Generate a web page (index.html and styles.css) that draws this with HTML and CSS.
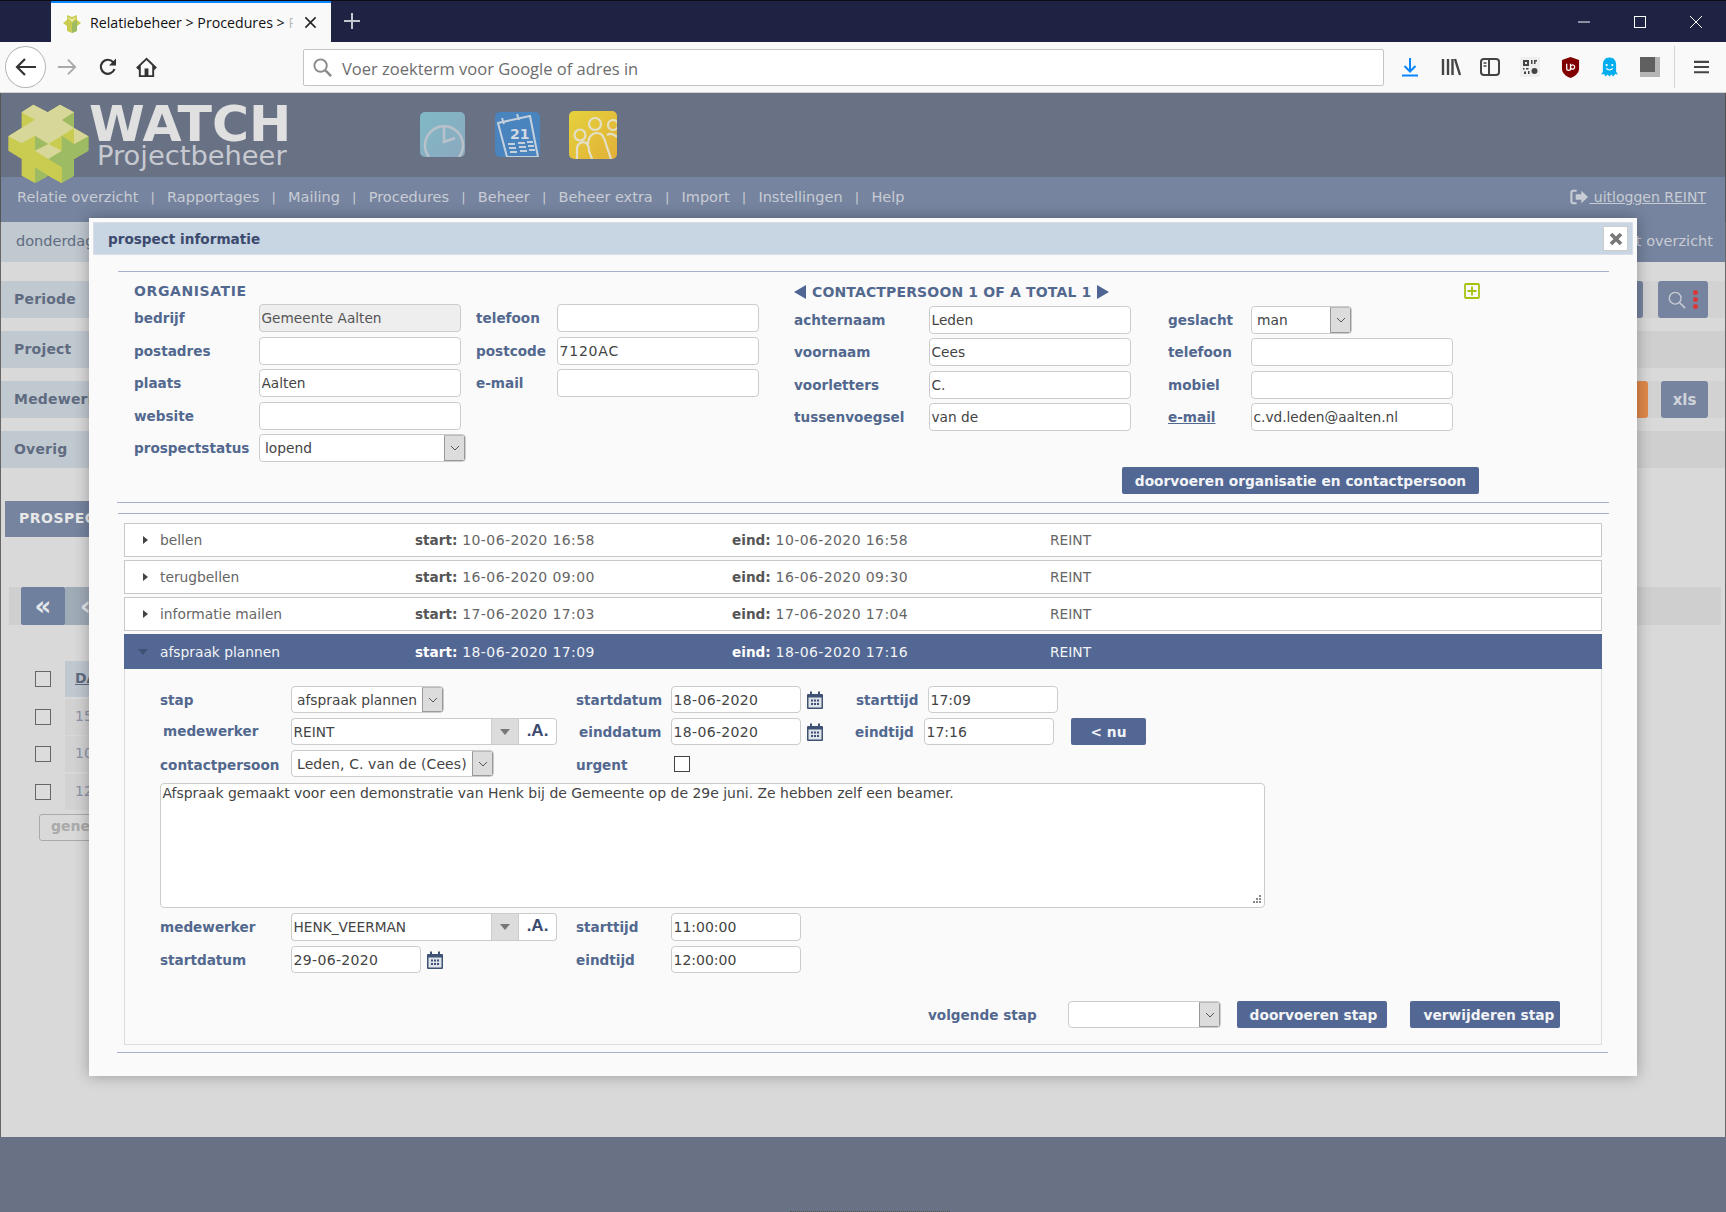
FILE: index.html
```html
<!DOCTYPE html>
<html lang="nl">
<head>
<meta charset="utf-8">
<title>Relatiebeheer &gt; Procedures</title>
<link rel="stylesheet" href="styles.css">
</head>
<body>
<div class="page">
  <div class="tabbar">
    <div class="tab">
      <svg class="favicon" viewBox="0 0 20 20"><path d="M5 2l5 2 5-2 0 5 4 3-4 3v5l-5 2-5-2v-5l-4-3 4-3z" fill="#c9cc50"/><path d="M10 10l5-3v11l-5 2z" fill="#9dbb62"/><path d="M5 4l5 2 5-2-5 5z" fill="#e8e8a0"/></svg>
      <span class="tab-title">Relatiebeheer &gt; Procedures &gt; <span class="tab-fade">P</span></span>
      <svg class="tab-close" viewBox="0 0 14 14"><path d="M1.500 1.500l11 11M12.500 1.500l-11 11" stroke="#222" stroke-width="1.600"/></svg>
    </div>
    <svg class="newtab" viewBox="0 0 18 18"><path d="M9 1v16M1 9h16" stroke="#c4c6d0" stroke-width="2"/></svg>
    <div class="winctl">
      <svg viewBox="0 0 12 12"><path d="M0 6h12" stroke="#fff" stroke-width="1"/></svg>
      <svg viewBox="0 0 12 12"><rect x=".5" y=".5" width="11" height="11" fill="none" stroke="#fff"/></svg>
      <svg viewBox="0 0 12 12"><path d="M0 0l12 12M12 0L0 12" stroke="#fff" stroke-width="1"/></svg>
    </div>
  </div>

  <div class="toolbar">
    <div class="backbtn">
      <svg viewBox="0 0 22 20"><path d="M10 2l-8 8 8 8M2 10h19" fill="none" stroke="#333" stroke-width="2.200"/></svg>
    </div>
    <svg class="tool tool-fwd" viewBox="0 0 22 20"><path d="M12 2l8 8-8 8M20 10H1" fill="none" stroke="#aaa" stroke-width="2"/></svg>
    <svg class="tool tool-reload" viewBox="0 0 20 20"><path d="M16.500 12a7 7 0 1 1-1.500-7l2 2" fill="none" stroke="#333" stroke-width="2.200"/><path d="M18 1.500v7h-7z" fill="#333"/></svg>
    <svg class="tool tool-home" viewBox="0 0 22 22"><path d="M11 2L1.500 11l1.300 1.300L4 11.200V20h14v-8.800l1.200 1.100 1.300-1.300z" fill="none" stroke="#333" stroke-width="2"/><rect x="9" y="12" width="4" height="8" fill="#333"/></svg>
    <div class="urlbar">
      <svg class="urlsearch" viewBox="0 0 22 22"><circle cx="9" cy="9" r="6.500" fill="none" stroke="#8a8a8a" stroke-width="2"/><path d="M14 14l6 6" stroke="#8a8a8a" stroke-width="2.600"/></svg>
      <span class="urltext">Voer zoekterm voor Google of adres in</span>
    </div>
    <div class="tools">
      <svg class="ti-a" viewBox="0 0 16 20"><path d="M8 1v13M2.500 9L8 14.500 13.500 9" fill="none" stroke="#0a84ff" stroke-width="2"/><path d="M0 18.500h16" stroke="#0a84ff" stroke-width="2"/></svg>
      <svg class="ti-b" viewBox="0 0 20 20"><path d="M2 2v16M7 2v16M11.500 2v16M14 2l5 16" fill="none" stroke="#444" stroke-width="2.400"/></svg>
      <svg class="ti-c" viewBox="0 0 20 18"><rect x="1" y="1" width="18" height="16" rx="3" fill="none" stroke="#444" stroke-width="2"/><path d="M9 1v16" stroke="#444" stroke-width="2"/><path d="M3.500 5h3M3.500 8h3" stroke="#444" stroke-width="1.500"/></svg>
      <svg class="ti-d" viewBox="0 0 20 20"><rect width="20" height="20" fill="#eee"/><path d="M3 3h6v6H3zM5 5v2h2V5z" fill="#444" fill-rule="evenodd"/><path d="M11 3h1.500v4H11zM14 3h3v1.500h-1.500V7H14zM3 11h1.500v1.500H3zM6 11h2.500v1.500H6zM4 14.500h2V17H4zM8 14h1.500v3H8z" fill="#444"/><circle cx="14.500" cy="14" r="3" fill="#444"/></svg>
      <svg class="ti-e" viewBox="0 0 20 22"><path d="M10 0l9 3v9c0 5-4 8-9 10-5-2-9-5-9-10V3z" fill="#800000"/><path d="M6 7v5a2 2 0 0 0 4 0V7M10 7v7M10 10.500a2.200 2.200 0 1 1 0 .1" fill="none" stroke="#fff" stroke-width="1.300"/></svg>
      <svg class="ti-f" viewBox="0 0 18 20"><path d="M9 0c5 0 7 3.500 7 8v7l2 3-3-.5L13 20l-2-2-2 2-2-2-2 2-2-2.500L0 18l2-3V8c0-4.500 2-8 7-8z" fill="#00aef0"/><circle cx="6" cy="8" r="1.200" fill="#fff"/><circle cx="12" cy="8" r="1.200" fill="#fff"/><path d="M5.500 11.500c2 2 5 2 7 0" fill="none" stroke="#fff" stroke-width="1.200"/></svg>
      <svg class="ti-g" viewBox="0 0 20 20"><rect width="20" height="20" fill="#b5b5b5"/><rect width="15" height="15" fill="#606060"/></svg>
      <span class="tool-sep"></span>
      <svg class="ti-h" viewBox="0 0 16 14"><path d="M0 1.500h16M0 7h16M0 12.500h16" stroke="#444" stroke-width="2.200"/></svg>
    </div>
  </div>

  <header class="apphead">
    <svg class="logo" viewBox="0 25 291 255">
      <path d="M65 50L100 27l43 23 37-23 42 23v47l43 25v43l-43 25v50l-37 22-40-22-40 22-40-22v-50L25 165v-43l40-25z" fill="#c9cc50"/>
      <path d="M145 190l40-25v-45l37 25 43-23v43l-43 25v50l-37 22v-47zM105 215l40 25-40 22zM105 120l40 25-40 20zM185 73l37-23v47z" fill="#9dbb62"/>
      <path d="M145 240l40-25v47z" fill="#c9cc50"/>
      <path d="M65 50l35-23 43 23 37-23 42 23-37 23 37 24-37 23-40 25-40-25-40 23-40-21 40-25 40-25zM222 97l43 25-43 23zM105 165l40-20 40 20-40 25z" fill="#d8d79a"/>
    </svg>
    <div class="brand">
      <div class="brand-main">WATCH</div>
      <div class="brand-sub">Projectbeheer</div>
    </div>
    <div class="apps">
      <svg class="app" viewBox="0 0 45 45"><defs><linearGradient id="g1" x1="0" y1="0" x2="1" y2="1"><stop offset="0" stop-color="#7fbac6"/><stop offset="1" stop-color="#8ca8bf"/></linearGradient></defs><rect width="45" height="45" rx="5" fill="url(#g1)"/><path d="M9 45a19 19 0 1 1 30 0" fill="none" stroke="#b9c2ca" stroke-width="2.500"/><path d="M24 14v16l11-4" fill="none" stroke="#b9c2ca" stroke-width="2.500"/></svg>
      <svg class="app" viewBox="0 0 45 45"><rect width="45" height="45" rx="5" fill="#4a84bf"/><path d="M3 11l32-7 8 41H12z" fill="none" stroke="#c4d0dc" stroke-width="2"/><path d="M7 6l2 6M22 2l2 6" stroke="#c4d0dc" stroke-width="2"/><text x="15" y="27" class="cal-num">21</text><path d="M13 32h7M23 31h7M32 30h6M14 36h7M24 35h7M33 34h6M15 40h7M25 39h7M34 38h6" stroke="#c4d0dc" stroke-width="2"/></svg>
      <svg class="app app-team" viewBox="0 0 48 48"><defs><linearGradient id="g3" x1="0" y1="0" x2="1" y2="1"><stop offset="0" stop-color="#e4d23c"/><stop offset="1" stop-color="#e2b038"/></linearGradient></defs><rect width="48" height="48" rx="5" fill="url(#g3)"/><g fill="none" stroke="#e4e0c8" stroke-width="2.200"><circle cx="11" cy="24" r="5.500"/><circle cx="26" cy="13" r="6"/><circle cx="44" cy="14" r="5"/><path d="M8 48V38c0-6 6-8 9-6 3 2 3 5 3 8l3 8"/><path d="M19 33c0-7 4-11 9-11s7 4 9 11l5 15"/><path d="M38 24c3-2 7-1 10 2"/></g></svg>
    </div>
  </header>

  <nav class="mainnav">
    <a>Relatie overzicht</a><i>|</i><a>Rapportages</a><i>|</i><a>Mailing</a><i>|</i><a>Procedures</a><i>|</i><a>Beheer</a><i>|</i><a>Beheer extra</a><i>|</i><a>Import</a><i>|</i><a>Instellingen</a><i>|</i><a>Help</a>
    <a class="logout"><svg class="logout-ic" viewBox="0 0 20 16"><path d="M7 1.500H3a1.500 1.500 0 0 0-1.500 1.500v10A1.500 1.500 0 0 0 3 14.500h4" fill="none" stroke="#c8ccd4" stroke-width="2.200"/><path d="M12 1.500L19 8l-7 6.500V11H6V5h6z" fill="#c8ccd4"/></svg><span> uitloggen REINT</span></a>
  </nav>

  <main class="backdrop">
    <div class="datebar"><div class="date-left">donderdag 18 juni 2020</div><div class="date-right">project overzicht</div></div>
    <div class="frow frow-a"><div class="flabel">Periode</div><div class="fspace"></div><span class="fbtn fbtn-blank"></span><span class="fbtn fbtn-search"><svg class="search-ic" viewBox="0 0 20 20"><circle cx="8" cy="8" r="6.500" fill="none" stroke="#c8ccd4" stroke-width="1.500"/><path d="M13 13l6 6" stroke="#c8ccd4" stroke-width="1.800"/></svg><span class="dots"><b></b><b></b><b></b></span></span></div>
    <div class="frow"><div class="flabel">Project</div><div class="fspace"></div></div>
    <div class="frow frow-a"><div class="flabel">Medewerker</div><div class="fspace"></div><span class="fbtn fbtn-orange"></span><span class="fbtn fbtn-xls">xls</span></div>
    <div class="frow"><div class="flabel">Overig</div><div class="fspace"></div></div>
    <div class="lower">
      <div class="ptab">PROSPECTS</div>
      <div class="pager"><span class="pg-first">«</span><span class="pg-prev">‹</span></div>
      <div class="list">
        <div class="lrow"><span class="cb"></span><span class="lcell lhead">DATUM</span></div>
        <div class="lrow"><span class="cb"></span><span class="lcell">15-06-2020</span></div>
        <div class="lrow"><span class="cb"></span><span class="lcell">10-06-2020</span></div>
        <div class="lrow"><span class="cb"></span><span class="lcell">12-06-2020</span></div>
      </div>
      <div class="genbtn">genereren</div>
    </div>
  </main>
  <footer class="pagefoot"><span class="footdots"></span></footer>

  <section class="modal">
    <div class="modal-title"><span>prospect informatie</span><span class="modal-x"><svg viewBox="0 0 14 14"><path d="M2 2l10 10M12 2L2 12" stroke="#777" stroke-width="3.600"/></svg></span></div>
    <hr class="rule rule-first">
    <div class="top">
      <div class="org">
        <div class="sec-head sec-org">ORGANISATIE</div>
        <div class="org-grid">
          <label>bedrijf</label><input class="in in-ro" value="Gemeente Aalten" readonly><span></span><label>telefoon</label><input class="in">
          <label>postadres</label><input class="in"><span></span><label>postcode</label><input class="in in-code" value="7120AC">
          <label>plaats</label><input class="in" value="Aalten"><span></span><label>e-mail</label><input class="in">
          <label>website</label><input class="in"><span></span><span></span><span></span>
          <label>prospectstatus</label><div class="sel sel-status"><select><option>lopend</option></select><span class="sel-btn"><svg viewBox="0 0 10 6"><path d="M1 1l4 4 4-4" fill="none" stroke="#555"/></svg></span></div>
        </div>
      </div>
      <div class="contact">
        <div class="sec-head sec-contact">
          <svg class="tri" viewBox="0 0 12 14"><path d="M12 0v14L0 7z"/></svg>
          <span>CONTACTPERSOON 1 OF A TOTAL 1</span>
          <svg class="tri" viewBox="0 0 12 14"><path d="M0 0v14l12-7z"/></svg>
          <svg class="plus" viewBox="0 0 16 16"><rect x="1" y="1" width="14" height="14" rx="1" fill="none" stroke="#a4c210" stroke-width="1.800"/><path d="M8 3.500v9M3.500 8h9" stroke="#a4c210" stroke-width="1.800"/></svg>
        </div>
        <div class="con-grid">
          <label>achternaam</label><input class="in" value="Leden"><span></span><label>geslacht</label><div class="sel sel-man"><select><option>man</option></select><span class="sel-btn"><svg viewBox="0 0 10 6"><path d="M1 1l4 4 4-4" fill="none" stroke="#555"/></svg></span></div>
          <label>voornaam</label><input class="in" value="Cees"><span></span><label>telefoon</label><input class="in">
          <label>voorletters</label><input class="in" value="C."><span></span><label>mobiel</label><input class="in">
          <label>tussenvoegsel</label><input class="in" value="van de"><span></span><label class="lnk">e-mail</label><input class="in" value="c.vd.leden@aalten.nl">
        </div>
        <button class="btn btn-save">doorvoeren organisatie en contactpersoon</button>
      </div>
    </div>
    <hr class="rule rule-b">
    <hr class="rule rule-c">
    <div class="steps">
      <div class="step"><span class="caret"></span><span>bellen</span><span class="dt"><b>start:</b> 10-06-2020 16:58</span><span class="dt"><b>eind:</b> 10-06-2020 16:58</span><span>REINT</span></div>
      <div class="step"><span class="caret"></span><span>terugbellen</span><span class="dt"><b>start:</b> 16-06-2020 09:00</span><span class="dt"><b>eind:</b> 16-06-2020 09:30</span><span>REINT</span></div>
      <div class="step"><span class="caret"></span><span>informatie mailen</span><span class="dt"><b>start:</b> 17-06-2020 17:03</span><span class="dt"><b>eind:</b> 17-06-2020 17:04</span><span>REINT</span></div>
      <div class="step step-open"><span class="caret caret-down"></span><span>afspraak plannen</span><span class="dt"><b>start:</b> 18-06-2020 17:09</span><span class="dt"><b>eind:</b> 18-06-2020 17:16</span><span>REINT</span></div>
      <div class="panel">
        <div class="prow">
          <label>stap</label>
          <div class="sel sel-stap"><select><option>afspraak plannen</option></select><span class="sel-btn"><svg viewBox="0 0 10 6"><path d="M1 1l4 4 4-4" fill="none" stroke="#555"/></svg></span></div>
          <label>startdatum</label>
          <div class="dategrp"><input class="in in-date in-num" value="18-06-2020"><svg class="cal" viewBox="0 0 16 18"><path d="M1 3h14a1 1 0 0 1 1 1v13a1 1 0 0 1-1 1H1a1 1 0 0 1-1-1V4a1 1 0 0 1 1-1z" fill="#3f5275"/><path d="M3 0.500h2v4H3zM11 0.500h2v4h-2z" fill="#3f5275"/><rect x="1.500" y="6.500" width="13" height="10" fill="#dfe3ea"/><path d="M4 8.500h2v2H4zM7 8.500h2v2H7zM10 8.500h2v2h-2zM4 12h2v2H4zM7 12h2v2H7zM10 12h2v2h-2z" fill="#3f5275"/></svg></div>
          <label>starttijd</label>
          <input class="in in-date in-time" value="17:09">
        </div>
        <div class="prow">
          <label class="ind up">medewerker</label>
          <div class="combo"><input class="in in-combo" value="REINT"><span class="combo-arrow"><svg viewBox="0 0 10 6"><path d="M0 0h10L5 6z" fill="#777"/></svg></span><span class="combo-a">.A.</span></div>
          <label class="ind">einddatum</label>
          <div class="dategrp"><input class="in in-date in-num" value="18-06-2020"><svg class="cal" viewBox="0 0 16 18"><path d="M1 3h14a1 1 0 0 1 1 1v13a1 1 0 0 1-1 1H1a1 1 0 0 1-1-1V4a1 1 0 0 1 1-1z" fill="#3f5275"/><path d="M3 0.500h2v4H3zM11 0.500h2v4h-2z" fill="#3f5275"/><rect x="1.500" y="6.500" width="13" height="10" fill="#dfe3ea"/><path d="M4 8.500h2v2H4zM7 8.500h2v2H7zM10 8.500h2v2h-2zM4 12h2v2H4zM7 12h2v2H7zM10 12h2v2h-2z" fill="#3f5275"/></svg></div>
          <label class="out">eindtijd</label>
          <div class="endgrp"><input class="in in-date in-time" value="17:16"><button class="btn btn-nu">&lt; nu</button></div>
        </div>
        <div class="prow">
          <label class="dn">contactpersoon</label>
          <div class="sel sel-con"><select><option>Leden, C. van de (Cees)</option></select><span class="sel-btn"><svg viewBox="0 0 10 6"><path d="M1 1l4 4 4-4" fill="none" stroke="#555"/></svg></span></div>
          <label class="dn">urgent</label>
          <span class="urgent"></span>
        </div>
        <textarea class="note">Afspraak gemaakt voor een demonstratie van Henk bij de Gemeente op de 29e juni. Ze hebben zelf een beamer.</textarea>
        <div class="prow prow-tall">
          <label>medewerker</label>
          <div class="combo"><input class="in in-combo" value="HENK_VEERMAN"><span class="combo-arrow"><svg viewBox="0 0 10 6"><path d="M0 0h10L5 6z" fill="#777"/></svg></span><span class="combo-a">.A.</span></div>
          <label>starttijd</label>
          <input class="in in-date in-time" value="11:00:00">
        </div>
        <div class="prow">
          <label>startdatum</label>
          <div class="dategrp"><input class="in in-date in-num" value="29-06-2020"><svg class="cal" viewBox="0 0 16 18"><path d="M1 3h14a1 1 0 0 1 1 1v13a1 1 0 0 1-1 1H1a1 1 0 0 1-1-1V4a1 1 0 0 1 1-1z" fill="#3f5275"/><path d="M3 0.500h2v4H3zM11 0.500h2v4h-2z" fill="#3f5275"/><rect x="1.500" y="6.500" width="13" height="10" fill="#dfe3ea"/><path d="M4 8.500h2v2H4zM7 8.500h2v2H7zM10 8.500h2v2h-2zM4 12h2v2H4zM7 12h2v2H7zM10 12h2v2h-2z" fill="#3f5275"/></svg></div>
          <label>eindtijd</label>
          <input class="in in-date in-time" value="12:00:00">
        </div>
        <div class="nextrow">
          <label class="next-label">volgende stap</label>
          <div class="sel sel-next"><select><option></option></select><span class="sel-btn"><svg viewBox="0 0 10 6"><path d="M1 1l4 4 4-4" fill="none" stroke="#555"/></svg></span></div>
          <button class="btn btn-step">doorvoeren stap</button>
          <button class="btn btn-step btn-del">verwijderen stap</button>
        </div>
      </div>
    </div>
    <hr class="rule rule-end">
  </section>
</div>
</body>
</html>
```

FILE: styles.css
```css
* { box-sizing: border-box; }
html, body { margin: 0; padding: 0; height: 1212px; overflow: hidden; }
body { font-family: "DejaVu Sans", Verdana, sans-serif; font-size: 14px; color: #444; }

.page { position: relative; width: 1726px; height: 1212px; display: flex; flex-direction: column; overflow: hidden; }

/* browser chrome */
.tabbar { height: 42px; background: #1e2343; border-top: 1px solid #0c0c14; display: flex; align-items: stretch; padding-left: 51px; flex: none; }
.tab { width: 280px; background: #f9f9fa; border-top: 2px solid #0a84ff; display: flex; align-items: center; font-family: "Open Sans", sans-serif; font-size: 14.200px; color: #111; padding-left: 11px; }
.favicon { width: 20px; height: 20px; margin-right: 8px; flex: none; }
.tab-title { white-space: nowrap; overflow: hidden; width: 203px; flex: none; }
.tab-fade { color: #bbb; }
.tab-close { width: 13px; height: 13px; margin-left: 11px; flex: none; }
.newtab { width: 18px; height: 18px; margin: 11px 0 0 12px; flex: none; }
.winctl { margin-left: auto; display: flex; gap: 44px; align-items: center; padding-right: 24px; }
.winctl svg { width: 12px; height: 12px; }

.toolbar { height: 51px; background: #f9f9fa; border-bottom: 1px solid #d4d4d4; display: flex; align-items: center; flex: none; position: relative; padding-left: 5px; }
.backbtn { width: 41px; height: 42px; border: 1px solid #b5b5b5; border-radius: 50%; background: #fff; display: flex; align-items: center; justify-content: center; flex: none; }
.backbtn svg { width: 22px; height: 20px; }
.tool { flex: none; }
.tool-fwd { width: 20px; height: 20px; margin-left: 11px; }
.tool-reload { width: 20px; height: 20px; margin-left: 21px; }
.tool-home { width: 21px; height: 21px; margin-left: 18px; }
.urlbar { width: 1081px; height: 37px; margin-left: 146px; border: 1px solid #c4c4c4; border-radius: 2px; background: #fff; display: flex; align-items: center; font-family: "Open Sans", sans-serif; font-size: 16.500px; color: #6d6d6d; padding-left: 8px; flex: none; }
.urlsearch { width: 21px; height: 21px; margin-right: 9px; }
.urltext { margin-top: 2px; }
.tools { display: flex; align-items: center; margin-left: 18px; height: 100%; }
.tools svg { flex: none; }
.ti-a { width: 16px; height: 20px; }
.ti-b { width: 20px; height: 20px; margin-left: 23px; }
.ti-c { width: 20px; height: 18px; margin-left: 19px; }
.ti-d { width: 20px; height: 20px; margin-left: 20px; }
.ti-e { width: 19px; height: 21px; margin-left: 21px; }
.ti-f { width: 17px; height: 20px; margin-left: 21px; }
.ti-g { width: 20px; height: 20px; margin-left: 22px; }
.tool-sep { width: 1px; height: 42px; background: #d4d4d4; margin-left: 14px; flex: none; }
.ti-h { width: 15px; height: 14px; margin-left: 19px; }

/* app behind overlay */
.apphead { height: 84px; background: #697185; display: flex; flex: none; border-left: 1px solid #555; border-right: 1px solid #555; position: relative; }
.logo { width: 97px; height: 85px; margin: 11px 0 0 -1px; flex: none; position: relative; z-index: 1; }
.brand { margin-left: -8px; width: 198px; flex: none; }
.brand-main { font-weight: bold; font-size: 50.500px; line-height: 38px; color: #e0e0e0; margin-top: 12px; }
.brand-sub { font-size: 27.300px; line-height: 26px; color: #c6cad0; margin: 0 0 0 8px; white-space: nowrap; }
.apps { display: flex; align-items: flex-start; gap: 30px; margin-left: 133px; padding-top: 19px; }
.app { width: 45px; height: 45px; flex: none; }
.app-team { width: 48px; height: 48px; margin-top: -1px; margin-left: -1px; }
.cal-num { font: bold 14px "DejaVu Sans", sans-serif; fill: #d0dae4; }

.mainnav { height: 45px; background: #76849f; display: flex; align-items: center; padding: 0 19px 5px 16px; flex: none; font-size: 14.500px; color: #c8ccd4; border-left: 1px solid #555; border-right: 1px solid #555; }
.mainnav i { font-style: normal; margin: 0 12.200px; font-size: 13px; }
.logout { margin-left: auto; text-decoration: underline; display: flex; align-items: center; font-size: 14px; }
.logout-ic { width: 19px; height: 16px; }
.logout span { white-space: pre; }

.backdrop { flex: 1; background: #d9d9d9; border-left: 1px solid #666; border-right: 1px solid #666; min-height: 0; }
.datebar { height: 40px; display: flex; font-size: 14.500px; color: #5f6b80; }
.date-left { flex: 1; background: #c0c8d0; padding: 11px 0 0 15px; }
.date-right { width: 400px; background: #76849f; color: #c8ccd4; text-align: right; padding: 11px 12px 0 0; }
.frow { height: 37px; margin-top: 13px; background: #cfcfcf; display: flex; align-items: stretch; }
.frow-a { background: #d2d2d2; }
.datebar + .frow { margin-top: 19px; }
.flabel { width: 300px; background: #c0c8d0; font-weight: bold; color: #5f6b80; padding: 10px 0 0 13px; font-size: 14px; letter-spacing: .2px; }
.fspace { flex: 1; }
.fbtn { background: #76849f; border-radius: 3px; display: flex; align-items: center; justify-content: center; flex: none; }
.fbtn-blank { width: 40px; margin-right: 15px; }
.fbtn-search { width: 50px; margin-right: 17px; gap: 7px; }
.search-ic { width: 18px; height: 18px; }
.dots { display: flex; flex-direction: column; gap: 2px; }
.dots b { width: 5px; height: 5px; border-radius: 50%; background: #d83a3a; display: block; }
.fbtn-orange { width: 40px; background: #e0884a; margin-right: 13px; }
.fbtn-xls { width: 47px; margin-right: 17px; font-weight: bold; color: #d0d4da; font-size: 15px; }
.lower { position: relative; padding: 33px 0 0 4px; }
.ptab { width: 320px; height: 36px; background: #76849f; color: #e8e8e8; font-weight: bold; font-size: 14px; padding: 9px 0 0 14px; letter-spacing: .5px; }
.pager { margin: 50px 4px 0 4px; height: 38px; background: #cfcfcf; display: flex; }
.pager span { display: flex; align-items: center; color: #e4e6ea; font-weight: bold; font-size: 26px; }
.pg-first { margin-left: 12px; width: 44px; background: #6f7f9e; border-radius: 2px; justify-content: center; }
.pg-prev { width: 80px; background: #a0abb8; padding-left: 15px; }
.list { margin: 36px 0 0 30px; display: flex; flex-direction: column; gap: 1.500px; }
.lrow { display: flex; align-items: center; height: 36px; }
.cb { width: 16px; height: 16px; border: 1px solid #666; background: #dcdcdc; margin-right: 14px; flex: none; }
.lcell { width: 200px; height: 36px; background: #d2d2d2; color: #8a92a8; padding: 9px 0 0 10px; }
.lhead { background: #c0c8d0; color: #5f6b80; font-weight: bold; text-decoration: underline; }
.genbtn { margin: 4px 0 0 34px; width: 120px; height: 27px; border: 1px solid #aaa; border-radius: 3px; color: #aaa; font-weight: bold; padding: 3px 0 0 11px; }

.pagefoot { height: 75px; background: #697185; display: flex; align-items: flex-end; flex: none; padding-left: 790px; }
.footdots { width: 160px; border-bottom: 1px dotted #555; }

/* modal */
.modal { position: absolute; left: 89px; top: 218px; width: 1548px; background: #fafafa; padding: 4px 4px 23px; box-shadow: 0 0 14px rgba(0,0,0,.3); }
.modal-title { height: 33px; background: #c8d5e2; border: 1px solid #d8dfe8; display: flex; align-items: center; justify-content: space-between; padding: 0 4px 0 14px; font-weight: bold; color: #3b4a6e; font-size: 13.600px; }
.modal-x { width: 25px; height: 25px; background: #fff; border: 1px solid #ccc; display: flex; align-items: center; justify-content: center; }
.modal-x svg { width: 14px; height: 14px; }
.rule { border: 0; height: 1px; background: #a3b2c9; margin: 0 24px 0 25px; }
.rule-first { margin-top: 16px; }
.rule-b { margin-left: 24px; margin-top: 0; }
.rule-c { margin-top: 10px; }
.rule-end { margin: 7px 25px 0 24px; }

.top { display: flex; height: 230px; padding: 11px 0 0 41px; align-items: flex-start; }
.org { width: 625px; flex: none; }
.contact { width: 686px; margin-left: 35px; flex: none; display: flex; flex-direction: column; }
.sec-head { height: 18px; line-height: 18px; font-weight: bold; color: #52688f; font-size: 14px; margin-bottom: 3px; }
.sec-org { letter-spacing: .6px; line-height: 16px; }
.sec-contact { display: flex; align-items: center; gap: 6px; margin-bottom: 5px; letter-spacing: .15px; }
.tri { width: 12px; height: 14px; fill: #4f6593; flex: none; }
.plus { width: 16px; height: 16px; margin-left: auto; margin-top: -2px; }
label { font-weight: bold; color: #52688f; font-size: 13.600px; white-space: nowrap; }
.org-grid { display: grid; grid-template-columns: 125px 202px 15px 81px 202px; grid-auto-rows: 28px; row-gap: 4.500px; align-items: center; }
.con-grid { display: grid; grid-template-columns: 135px 202px 37px 83px 202px; grid-auto-rows: 28px; row-gap: 4.400px; align-items: center; }
.lnk { text-decoration: underline; }
.in { font: 13.700px "DejaVu Sans", sans-serif; color: #444; height: 100%; width: 100%; border: 1px solid #ccc; border-radius: 4px; background: #fff; padding: 0 1.500px; outline: 0; min-width: 0; }
.in-ro { background: #eee; color: #555; }
.in-code { font-size: 14px; letter-spacing: .8px; }
.in-num { font-size: 14px; letter-spacing: .35px; }
.in-time { font-size: 14px; }
.sel { display: flex; height: 100%; border: 1px solid #ccc; border-radius: 4px; background: #fff; overflow: hidden; }
.sel select { flex: 1; min-width: 0; border: 0; background: transparent; appearance: none; font: 13.800px "DejaVu Sans", sans-serif; color: #444; padding: 0 0 0 5px; outline: 0; }
.sel-btn { width: 21px; background: #dcdcdc; border-left: 1px solid #999; border-right: 1px solid #999; border-bottom: 1px solid #999; border-top: 1px solid #bbb; display: flex; align-items: center; justify-content: center; flex: none; }
.sel-btn svg { width: 10px; height: 6px; }
.sel-status { width: 207px; }
.sel-man { width: 101px; }
.sel-stap { width: 153px; }
.sel-con { width: 203px; }
.sel-con select { font-size: 14px; letter-spacing: .1px; }
.sel-next { width: 153px; height: 27px; }
.btn { height: 27px; border: 0; border-radius: 2px; background: #526793; color: #f2f4f7; font: bold 13.750px "DejaVu Sans", sans-serif; padding: 0; white-space: nowrap; }
.btn-save { width: 357px; margin: 36px 1px 0 auto; }

.steps { margin: 9px 31px 0 31px; display: flex; flex-direction: column; gap: 3px; }
.step { height: 34px; border: 1px solid #c8c8c8; background: #fff; display: grid; grid-template-columns: 35px 255px 317px 318px 1fr; align-items: center; color: #666; font-size: 13.800px; }
.step b { color: #555; font-size: 13.600px; }
.dt { font-size: 14px; letter-spacing: .4px; }
.dt b { letter-spacing: 0; }
.step-open { height: 35px; background: #526793; border: 0; color: #f2f4f7; grid-template-columns: 36px 255px 317px 318px 1fr; margin-bottom: -3px; }
.step-open b { color: #fff; }
.caret { width: 0; height: 0; border-left: 5px solid #444; border-top: 4px solid transparent; border-bottom: 4px solid transparent; justify-self: center; margin-left: 6px; }
.caret-down { border-top: 6px solid #3f5275; border-left: 5px solid transparent; border-right: 5px solid transparent; border-bottom: 0; margin-left: 1px; }

.panel { border: 1px solid #ddd; border-top: 0; padding: 17px 0 16px 35px; }
.prow { display: grid; grid-template-columns: 131px 285px 95px 185px 72px 300px; height: 27px; align-items: center; margin-bottom: 5px; }
.prow-tall { height: 28px; margin-top: 5px; }
.prow .in-date { width: 130px; }
.ind { padding-left: 3px; }
.up { margin-top: -2px; }
.dn { margin-top: 2px; }
.out { margin-left: -1px; }
.dategrp { display: flex; align-items: center; gap: 6px; height: 100%; }
.cal { width: 16px; height: 18px; flex: none; }
.prow > .in { height: 100%; }
.combo { display: flex; height: 100%; width: 266px; }
.in-combo { width: 200px; flex: none; border-radius: 4px 0 0 4px; border-right: 0; }
.combo-arrow { width: 28px; background: #dcdcdc; border: 1px solid #ccc; display: flex; align-items: center; justify-content: center; flex: none; }
.combo-arrow svg { width: 10px; height: 6px; }
.combo-a { width: 38px; background: #fff; border: 1px solid #ccc; border-left: 0; border-radius: 0 4px 4px 0; font: bold 17px "Liberation Sans", sans-serif; color: #3b4a6e; text-align: center; line-height: 23px; }
.endgrp { display: flex; align-items: center; gap: 17px; height: 100%; margin-left: -4px; }
.btn-nu { width: 75px; height: 27px; }
.urgent { width: 16px; height: 16px; border: 1px solid #444; background: #fff; margin-left: 3px; display: block; }
.note { display: block; width: 1105px; height: 125px; margin: 6px 0 0; border: 1px solid #ccc; border-radius: 4px; background: #fff; font: 13.960px "DejaVu Sans", sans-serif; color: #444; padding: 1px 1.500px; outline: 0; }
.note::-webkit-resizer { background: url("data:image/svg+xml,%3Csvg xmlns='http://www.w3.org/2000/svg' width='15' height='15'%3E%3Cg fill='%23888'%3E%3Crect x='10' y='3' width='2' height='2'/%3E%3Crect x='7' y='6' width='2' height='2'/%3E%3Crect x='10' y='6' width='2' height='2'/%3E%3Crect x='4' y='9' width='2' height='2'/%3E%3Crect x='7' y='9' width='2' height='2'/%3E%3Crect x='10' y='9' width='2' height='2'/%3E%3C/g%3E%3C/svg%3E") no-repeat; }
.nextrow { display: flex; align-items: center; height: 27px; margin-top: 28px; padding-left: 768px; }
.next-label { width: 140px; }
.btn-step { width: 150px; margin-left: 16px; height: 27px; padding-left: 3px; }
.btn-del { margin-left: 23px; padding-left: 8px; }
```
